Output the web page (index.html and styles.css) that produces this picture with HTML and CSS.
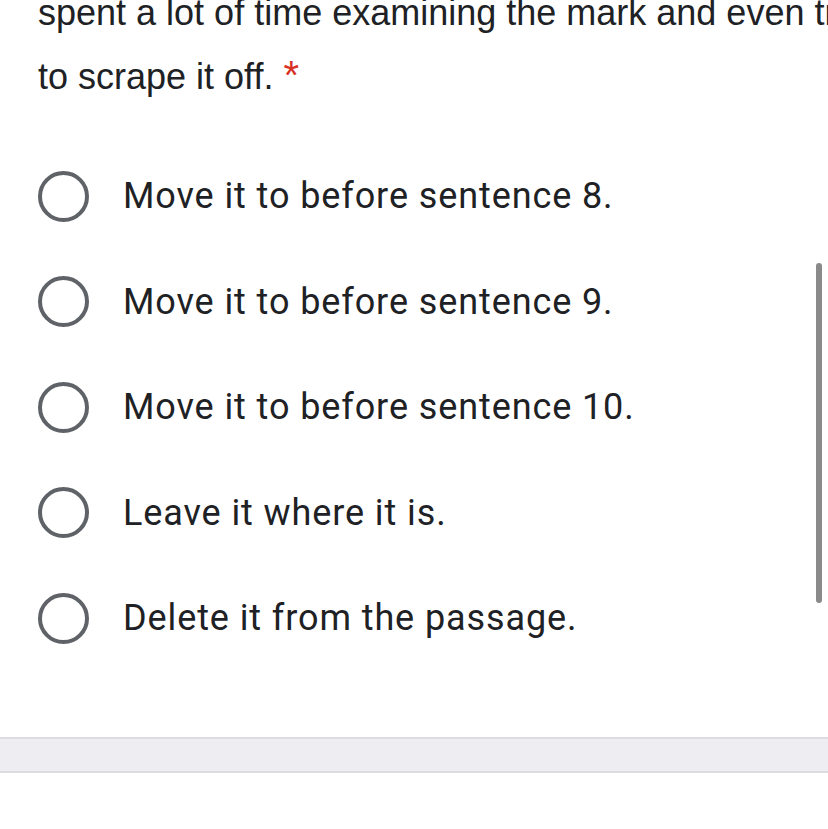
FILE: index.html
```html
<!DOCTYPE html>
<html>
<head>
<meta charset="utf-8">
<link rel="stylesheet" href="styles.css">
</head>
<body>
<div class="page">
  <div class="question">
    <div class="qline">spent a lot of time examining the mark and even tried</div>
    <div class="qline">to scrape it off.<span class="req">*</span></div>
  </div>
  <div class="options">
    <div class="option"><span class="radio"></span><span class="label">Move it to before sentence 8.</span></div>
    <div class="option"><span class="radio"></span><span class="label">Move it to before sentence 9.</span></div>
    <div class="option"><span class="radio"></span><span class="label">Move it to before sentence 10.</span></div>
    <div class="option"><span class="radio"></span><span class="label">Leave it where it is.</span></div>
    <div class="option"><span class="radio"></span><span class="label">Delete it from the passage.</span></div>
  </div>
  <div class="band"></div>
  <div class="scrollbar"></div>
</div>
</body>
</html>
```
FILE: styles.css
```css
html, body {
  margin: 0;
  padding: 0;
  background: #ffffff;
}
body {
  width: 828px;
  height: 829px;
  overflow: hidden;
}
.page {
  position: relative;
  width: 828px;
  height: 829px;
  overflow: hidden;
}
.question {
  margin-top: -18.5px;
  padding-left: 38px;
  font-family: "Liberation Sans", Arial, sans-serif;
  font-size: 36px;
  line-height: 62px;
  color: #202124;
  white-space: nowrap;
}
.req {
  color: #d93025;
  font-size: 40px;
  margin-left: 10px;
  vertical-align: 0px;
}
.options {
  margin-top: 35.75px;
  display: flex;
  flex-direction: column;
}
.option {
  height: 105.5px;
  display: flex;
  align-items: center;
  padding-left: 38px;
}
.radio {
  width: 51px;
  height: 51px;
  box-sizing: border-box;
  border: 4.5px solid #5f6368;
  border-radius: 50%;
  flex: none;
}
.label {
  margin-left: 34px;
  font-family: Roboto, "Noto Sans", sans-serif;
  font-size: 36px;
  letter-spacing: 0.9px;
  color: #202124;
  white-space: nowrap;
}
.band {
  margin-top: 66.25px;
  height: 32px;
  background: #eeedf2;
  border-top: 2px solid #dddce1;
  border-bottom: 2px solid #dddce1;
}
.scrollbar {
  position: absolute;
  left: 816px;
  top: 263px;
  width: 6px;
  height: 340px;
  border-radius: 3px;
  background: #8a8a8a;
}
```
